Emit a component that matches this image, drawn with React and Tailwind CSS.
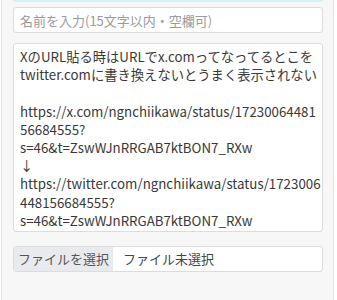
import React from 'react'

const FONT = { fontFamily: '"Noto Sans CJK JP", "Noto Sans", sans-serif' }

const BODY_LINES = [
    'XのURL貼る時はURLでx.comってなってるとこを',
    'twitter.comに書き換えないとうまく表示されない',
    '',
    'https://x.com/ngnchiikawa/status/17230064481',
    '56684555?',
    's=46&t=ZswWJnRRGAB7ktBON7_RXw',
    '↓',
    'https://twitter.com/ngnchiikawa/status/1723006',
    '448156684555?',
    's=46&t=ZswWJnRRGAB7ktBON7_RXw',
]

const App = () => {
    return (
        <div className="w-[337px] h-[300px] bg-white overflow-hidden" style={FONT}>
            <div className="ml-[1px] w-[333px] h-full border-x border-[#e4e4e4] bg-[#f7f7f7] pl-[11px]">
                {/* bottom edge of the block above */}
                <div className="w-[310px] h-[2px] bg-[#d6f2f2] rounded-b-[2px]" />

                {/* name */}
                <div className="mt-[5px] w-[310px] h-[26px] bg-white border border-[#dcdcdc] rounded-[3px] flex items-center px-[6px]">
                    <span className="text-[13px] text-[#9a9a9a] leading-none">名前を入力(15文字以内・空欄可)</span>
                </div>

                {/* body */}
                <div className="mt-[10px] w-[310px] h-[189px] bg-white border border-[#dcdcdc] rounded-[3px] px-[6px] pt-[4px] overflow-hidden">
                    {BODY_LINES.map((line, i) => (
                        <div key={i} className="text-[13.3px] leading-[18.2px] h-[18.2px] text-[#383838] whitespace-pre">
                            {line}
                        </div>
                    ))}
                </div>

                {/* file */}
                <div className="mt-[14px] w-[310px] h-[26px] bg-white border border-[#dcdcdc] rounded-[3px] flex overflow-hidden">
                    <div className="w-[99px] h-full bg-[#e9eaee] flex items-center justify-center text-[13px] text-[#555]">
                        ファイルを選択
                    </div>
                    <div className="flex items-center pl-[10px] text-[13px] text-[#444]">ファイル未選択</div>
                </div>
            </div>
        </div>
    )
}

export default App
